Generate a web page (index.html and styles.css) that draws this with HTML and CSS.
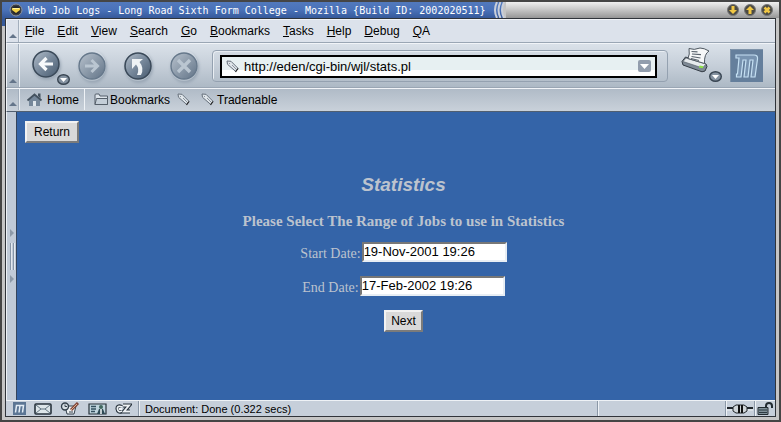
FILE: index.html
```html
<!DOCTYPE html>
<html lang="en">
<head>
    <meta charset="UTF-8">
    <meta name="viewport" content="width=device-width, initial-scale=1.0">
    <title>Web Job Logs</title>
    <link rel="stylesheet" href="styles.css">
</head>
<body>
<svg width="0" height="0" class="defs" aria-hidden="true">
    <defs>
        <linearGradient id="ball" x1="0" y1="0" x2="1" y2="1">
            <stop offset="0" stop-color="#b4bfcb"/>
            <stop offset=".5" stop-color="#77889b"/>
            <stop offset="1" stop-color="#475a6e"/>
        </linearGradient>
        <linearGradient id="paleball" x1="0" y1="0" x2="1" y2="1">
            <stop offset="0" stop-color="#b8c2cd"/>
            <stop offset="1" stop-color="#617387"/>
        </linearGradient>
        <symbol id="tag" viewBox="0 0 13 13">
            <path d="M1 1l4 .3 7 7-2.500 3-8-7z" fill="#dfe5ea" stroke="#67717c"/>
            <path d="M3 3l1 1M6 5l4 4" stroke="#8a949e"/>
            <path d="M12 8.500l-2.500 3.500" stroke="#222" stroke-width="1.200"/>
        </symbol>
        <symbol id="drop" viewBox="0 0 13 11">
            <ellipse cx="6.500" cy="5.500" rx="5.800" ry="4.800" fill="#8492a1" stroke="#394552" stroke-width="1.400"/>
            <path d="M3 4h7l-3.500 4z" fill="#fff"/>
        </symbol>
    </defs>
</svg>
<div class="window">
    <header class="titlebar">
        <div class="title">
            <svg class="winmenu" width="14" height="14" viewBox="0 0 14 14"><circle cx="7" cy="7" r="6" fill="#3a3d42" stroke="#8d95a2"/><circle cx="7" cy="7" r="4" fill="#26282b"/><path d="M3 5h8v2l-4 3-4-3z" fill="#f0cf45"/><path d="M4 5.500h6" stroke="#fff2a0"/></svg>
            <span>Web Job Logs - Long Road Sixth Form College - Mozilla {Build ID: 2002020511}</span>
        </div>
        <svg class="swoosh" width="16" height="16" viewBox="0 0 16 16"><path d="M16 0H14Q9 8 14 16h2z" fill="#c4c4c4"/><path d="M7 0Q3 8 7 16M10.500 0Q6.500 8 10.500 16M14 0Q10 8 14 16" fill="none" stroke="#c9cfda" stroke-width="2"/></svg>
        <div class="winbuttons">
            <button aria-label="Minimize"><svg width="12" height="12" viewBox="0 0 12 12"><circle cx="6" cy="6" r="5.500" fill="#4b4a45" stroke="#777"/><path d="M4.500 2h3v4H10L6 10 2 6h2.500z" fill="#f1c744"/></svg></button>
            <button aria-label="Maximize"><svg width="12" height="12" viewBox="0 0 12 12"><circle cx="6" cy="6" r="5.500" fill="#4b4a45" stroke="#777"/><path d="M4.500 10h3V6H10L6 2 2 6h2.500z" fill="#f1c744"/></svg></button>
            <button aria-label="Close"><svg width="12" height="12" viewBox="0 0 12 12"><circle cx="6" cy="6" r="5.500" fill="#4b4a45" stroke="#777"/><path d="M3.500 3.500l5 5M8.500 3.500l-5 5" stroke="#f1c744" stroke-width="2.600"/></svg></button>
        </div>
    </header>
    <div class="frame">
        <div class="browser">
            <nav class="bar menubar">
                <div class="grippy"></div>
                <div class="menus">
                    <a href="#"><u>F</u>ile</a>
                    <a href="#"><u>E</u>dit</a>
                    <a href="#"><u>V</u>iew</a>
                    <a href="#"><u>S</u>earch</a>
                    <a href="#"><u>G</u>o</a>
                    <a href="#"><u>B</u>ookmarks</a>
                    <a href="#"><u>T</u>asks</a>
                    <a href="#"><u>H</u>elp</a>
                    <a href="#"><u>D</u>ebug</a>
                    <a href="#"><u>Q</u>A</a>
                </div>
            </nav>
            <div class="bar toolbar">
                <div class="grippy"></div>
                <div class="navbuttons">
                    <div class="back">
                        <button class="round" aria-label="Back"><svg width="28" height="28" viewBox="0 0 28 28"><circle cx="14" cy="14" r="13" fill="url(#ball)" stroke="#3b4a5a" stroke-width="1.600"/><path d="M14.500 8L8.500 14l6 6M9 14h12" fill="none" stroke="#f7f9fb" stroke-width="3.200"/></svg></button>
                        <button class="more" aria-label="Back list"><svg width="13" height="11"><use href="#drop"/></svg></button>
                    </div>
                    <button class="round" aria-label="Forward"><svg width="28" height="28" viewBox="0 0 28 28"><circle cx="14" cy="14" r="13" fill="url(#paleball)" stroke="#66788b" stroke-width="1.400"/><path d="M13.500 8l6 6-6 6M19 14H7" fill="none" stroke="#bac6d1" stroke-width="3"/></svg></button>
                    <button class="round" aria-label="Reload"><svg width="28" height="28" viewBox="0 0 28 28"><circle cx="14" cy="14" r="13" fill="url(#ball)" stroke="#3b4a5a" stroke-width="1.600"/><path d="M8 7h11l-3.500 3q5 6 1.500 13h-4q3-6-1-10.500L8 17z" fill="#eef2f5"/></svg></button>
                    <button class="round" aria-label="Stop"><svg width="28" height="28" viewBox="0 0 28 28"><circle cx="14" cy="14" r="13" fill="url(#paleball)" stroke="#66788b" stroke-width="1.400"/><path d="M8 8l12 12M20 8L8 20" stroke="#bac6d1" stroke-width="3.400"/></svg></button>
                </div>
                <div class="urlpanel">
                    <div class="urlbox">
                        <svg width="13" height="13"><use href="#tag"/></svg>
                        <input type="text" value="http://eden/cgi-bin/wjl/stats.pl" aria-label="Location">
                        <button class="history" aria-label="History"><svg width="13" height="12" viewBox="0 0 13 12"><rect width="13" height="12" rx="2" fill="#929dad"/><path d="M2 4h9L6.500 9z" fill="#fff"/></svg></button>
                    </div>
                </div>
                <div class="print">
                    <button aria-label="Print"><svg width="28" height="26" viewBox="0 0 28 26"><path d="M1 14.500l3.500-4.500L25 17l1 2.500-2 4.500-3 .8L2 18z" fill="#7f8a96" stroke="#333b44"/><path d="M2 14.500l3-3.500 20 6-3.500 4z" fill="#e6eaed" stroke="#5a636d" stroke-width=".7"/><path d="M8 1.500q5 2 11-.5 4 0 9 3-5 3-4.500 12.500L7 11.500q2-4 1-10z" fill="#f6f7f8" stroke="#4f5861"/><path d="M10.500 4.500l6 .3M11 7l9 .6M10.500 9.500l9 1.500M10 11.500l8 2" stroke="#59626c" stroke-width="1.200"/><path d="M18.500 18.500l4 .8-.6 2-4-.6z" fill="#8ee04b"/></svg></button>
                    <button class="more" aria-label="Print options"><svg width="13" height="11"><use href="#drop"/></svg></button>
                </div>
                <svg class="throbber" width="33" height="33" viewBox="0 0 33 33"><rect width="33" height="33" fill="#657f9c"/><path d="M.5 33V.5H33" fill="none" stroke="#7f93a9"/><path d="M6 6h18q4 0 3.500 4L25 28h-4l2-17h-3l-2 17h-4l2-17h-3l-2 17H6.500V25h1L9 9H6z" fill="#7893b0" stroke="#c5e0f3" stroke-width="1.200"/></svg>
            </div>
            <div class="bar personal">
                <div class="grippy"></div>
                <a class="home" href="#"><svg width="18" height="15" viewBox="0 0 18 15"><path d="M3 8v6h11V8L8.500 3z" fill="#75879a"/><path d="M1.500 8.500l7-6 7 6" fill="none" stroke="#44525f" stroke-width="1.800"/><path d="M12 1.500h2.500v5L12 4z" fill="#44525f"/><path d="M7 9h3v5H7z" fill="#dfe6ec"/></svg>Home</a>
                <a class="folder" href="#"><svg width="15" height="13" viewBox="0 0 15 13"><path d="M1 11.500V2q0-1 1-1h3l1 2h7.500v8.500z" fill="#dce3ea" stroke="#555f6a"/><path d="M1 11.500l1.500-6h11v6z" fill="#c4ced8" stroke="#555f6a"/></svg>Bookmarks</a>
                <a class="tag" href="#" aria-label="Untitled"><svg width="13" height="13"><use href="#tag"/></svg></a>
                <a class="tag" href="#"><svg width="13" height="13"><use href="#tag"/></svg>Tradenable</a>
            </div>
            <div class="middle">
                <div class="sidebar">
                    <svg width="6" height="56" viewBox="0 0 6 56"><path d="M1 1l4 4-4 4zM1 47l4 4-4 4z" fill="#8c99a8"/><path d="M1.500 15v27M4.500 15v27" stroke="#8796a8"/><path d="M2.500 15v27M5.500 15v27" stroke="#e5eaf0"/></svg>
                </div>
                <main>
                    <button class="button">Return</button>
                    <form>
                        <h1>Statistics</h1>
                        <h2>Please Select The Range of Jobs to use in Statistics</h2>
                        <div class="field">
                            <label for="start">Start Date:</label>
                            <input type="text" id="start" value="19-Nov-2001 19:26">
                        </div>
                        <div class="field">
                            <label for="end">End Date:</label>
                            <input type="text" id="end" value="17-Feb-2002 19:26">
                        </div>
                        <button type="button" class="button">Next</button>
                    </form>
                </main>
            </div>
            <footer>
                <div class="tasks">
                    <svg width="13" height="13" viewBox="0 0 13 13"><rect width="13" height="13" fill="#5c7694"/><path d="M2.500 10.500L3.500 3.500h7l-1 7M7 3.500l-1 7" fill="none" stroke="#e3edf6" stroke-width="1.500"/></svg>
                    <svg width="18" height="12" viewBox="0 0 18 12"><rect x="1" y="1" width="16" height="10" rx="1" fill="#dde5e9" stroke="#27323c" stroke-width="1.600"/><path d="M2 2l5 4h4l5-4M2 10l5-4M16 10l-5-4" fill="none" stroke="#637581"/></svg>
                    <svg width="20" height="13" viewBox="0 0 20 13"><path d="M5 4h11l-2 8H7z" fill="#edf0f2" stroke="#34414c"/><circle cx="5" cy="4.500" r="3.500" fill="#d7dfe5" stroke="#34414c" stroke-width="1.400"/><path d="M5 2.500v2h2M9 10h4" fill="none" stroke="#34414c"/><path d="M18 1l-7 7" stroke="#80463b" stroke-width="3"/><path d="M17 2l-6 6" stroke="#dfb08c"/></svg>
                    <svg width="19" height="12" viewBox="0 0 19 12"><path d="M1 1h17v10H1z" fill="#bfd4dd" stroke="#28333b" stroke-width="1.200"/><path d="M3 3.500h5M3 6h5M3 8.500h4" stroke="#34505f" stroke-width="1.400"/><circle cx="13" cy="4" r="2" fill="#42675f"/><path d="M9 11l2-5h4l2 5z" fill="#2e4a55"/><path d="M13 6v5" stroke="#f6fafa" stroke-width="1.500"/></svg>
                    <svg width="17" height="11" viewBox="0 0 17 11"><g fill="none" stroke="#27323c" stroke-width="4"><path d="M7 4Q2 2 2.500 6T7 8"/><path d="M8 2.500h6L9 8.500h6"/></g><g fill="none" stroke="#edf1f4" stroke-width="1.900"><path d="M7 4Q2 2 2.500 6T7 8M4 6h3"/><path d="M8 2.500h6L9 8.500h6"/></g></svg>
                </div>
                <div class="status">Document: Done (0.322 secs)</div>
                <div class="progress"></div>
                <div class="online"><svg width="26" height="10" viewBox="0 0 26 10"><path d="M0 4h26" stroke="#20262b" stroke-width="2"/><path d="M0 6h26" stroke="#eef2f4"/><path d="M6 3l3-2h8l3 2v4l-3 2H9L6 7z" fill="#cfd5d8" stroke="#20262b"/><path d="M12 1v8M15 1v8" stroke="#111" stroke-width="2"/></svg></div>
                <div class="lock"><svg width="17" height="13" viewBox="0 0 17 13"><path d="M9 6V4q0-3 3-3t3 3v2" fill="none" stroke="#222b31" stroke-width="2"/><path d="M1 5.500h10v7H1z" fill="#809099" stroke="#222b31"/><path d="M2 8h8M2 10.500h8" stroke="#2d3a42"/></svg></div>
            </footer>
        </div>
    </div>
</div>
</body>
</html>
```
FILE: styles.css
```css
* {
    box-sizing: border-box;
}

body {
    margin: 0;
    font-family: "Liberation Sans", Arial, sans-serif;
    font-size: 12px;
    color: black;
}

.defs {
    position: absolute;
}

svg {
    display: block;
    flex: none;
}

button {
    padding: 0;
    border: none;
    background: none;
    font: inherit;
}

a {
    color: black;
    text-decoration: none;
}

.window {
    display: flex;
    flex-direction: column;
    min-height: 100vh;
    border: 2px solid #454545;
    background: #454545;
}

.titlebar {
    display: flex;
    height: 16px;
    background: linear-gradient(#efefef, #c4c4c4 50%, #969696);
}

.title {
    display: flex;
    align-items: center;
    gap: 5px;
    padding-left: 7px;
    padding-right: 4px;
    background: linear-gradient(#5279bd, #4a72b9 50%, #36599a);
    color: white;
    font-family: "DejaVu Sans Mono", monospace;
    font-size: 10px;
    white-space: pre;
}

.swoosh {
    background: linear-gradient(#5279bd, #4a72b9 50%, #36599a);
}

.winbuttons {
    display: flex;
    align-items: center;
    gap: 5px;
    margin-left: auto;
    padding-right: 6px;
}

.frame {
    display: flex;
    flex: 1;
    padding: 0 3px 3px;
    background: linear-gradient(#36599a 8px, transparent 8px) left / 3px 100% no-repeat, #c5c5c5;
}

.browser {
    display: flex;
    flex-direction: column;
    flex: 1;
    border: 1px solid #30343a;
}

.bar {
    display: flex;
    align-items: center;
    border-top: 1px solid #f1f4f8;
    border-left: 1px solid #f1f4f8;
    border-bottom: 1px solid #9aa6b4;
}

/* collapse handle on the left of every bar */
.grippy {
    align-self: stretch;
    display: flex;
    align-items: flex-end;
    justify-content: center;
    width: 12px;
    padding-bottom: 4px;
    border-right: 1px solid #a3afbd;
    box-shadow: 1px 0 #e9eef3;
}

.grippy::after {
    content: "";
    border: 4px solid transparent;
    border-top: none;
    border-bottom-color: #64758a;
}

.menubar {
    height: 24px;
    background: #dce2eb;
}

.menus {
    display: flex;
    gap: 13px;
    padding-left: 6px;
}

.toolbar {
    height: 45px;
    background: linear-gradient(#dae1e9, #c6cfd9 50%, #adb9c5);
}

.navbuttons {
    display: flex;
    gap: 18px;
    padding-left: 13px;
}

.round {
    border-radius: 50%;
    box-shadow: 1px 2px 3px #9aa7b5;
}

.back,
.print {
    position: relative;
}

.more {
    position: absolute;
    left: 25px;
    bottom: -4px;
}

.urlpanel {
    flex: 1;
    margin: 0 13px 0 14px;
    padding: 4px 10px 3px 7px;
    border: 1px solid #94a1b0;
    border-radius: 4px;
    box-shadow: inset 1px 1px #e9eef3;
}

.urlbox {
    display: flex;
    align-items: center;
    height: 23px;
    padding: 0 4px;
    border: 2px solid black;
    background: linear-gradient(#e7f0f2 70%, white 70%);
}

.urlbox input {
    flex: 1;
    min-width: 0;
    padding: 0 5px;
    border: none;
    background: none;
    font: inherit;
    font-size: 13px;
}

.print {
    margin: 0 21px 8px 0;
}

.print .more {
    left: 28px;
    bottom: -6px;
}

.throbber {
    margin-right: 12px;
}

.personal {
    height: 24px;
    padding-bottom: 1px;
    background: linear-gradient(#b0bbc7, #c9d1da);
    border-bottom: 1px solid #515f70;
}

.personal a {
    display: flex;
    align-items: center;
}

.personal .home {
    align-self: stretch;
    gap: 3px;
    padding: 0 5px 0 7px;
    border-right: 1px solid #eef2f6;
}

.personal .folder {
    gap: 1px;
    padding-left: 9px;
}

.personal .tag {
    gap: 3px;
    padding-left: 7px;
}

.personal .tag + .tag {
    padding-left: 11px;
}

.middle {
    display: flex;
    flex: 1;
}

.sidebar {
    display: flex;
    align-items: center;
    justify-content: center;
    width: 11px;
    background: #c0cad7;
    border-left: 1px solid #eef2f6;
    border-right: 1px solid #34445c;
}

main {
    flex: 1;
    padding: 9px 8px;
    background: #3464a8;
    color: #bcc3ce;
}

.button {
    height: 22px;
    padding: 0 5px;
    border: 2px solid;
    border-color: #f2f2f2 #7b7b7b #7b7b7b #f2f2f2;
    background: #d9d9d9;
    color: black;
}

main > .button {
    padding: 0 7px;
}

form {
    display: flex;
    flex-direction: column;
    align-items: center;
    padding: 31px 0 0 15px;
}

h1 {
    margin: 0 0 16px;
    font-size: 19px;
    line-height: 22px;
    font-style: italic;
}

h2 {
    margin: 0 0 12px;
    font-family: "Liberation Serif", "Times New Roman", serif;
    font-size: 15px;
    line-height: 18px;
}

.field {
    display: flex;
    align-items: center;
    gap: 1px;
    margin-bottom: 14px;
    font-family: "Liberation Serif", "Times New Roman", serif;
    font-size: 14px;
}

.field label {
    padding-top: 3px;
}

.field input {
    width: 145px;
    height: 20px;
    padding: 0 0 2px;
    border: 2px solid;
    border-color: #777 #e8eef4 #e8eef4 #777;
    background: white;
    font-family: "Liberation Sans", Arial, sans-serif;
    font-size: 13px;
}

footer {
    display: flex;
    height: 16px;
    background: #c6cfda;
    border-top: 1px solid #eef2f6;
    font-size: 11px;
}

footer > div {
    display: flex;
    align-items: center;
    border-right: 1px solid #8b98a7;
    box-shadow: 1px 0 #eef2f6;
}

.tasks {
    gap: 8px;
    padding: 0 6px 0 7px;
}

.status {
    flex: 1;
    padding-left: 6px;
}

.progress {
    width: 128px;
}

.online {
    padding: 0 1px;
}

footer .lock {
    padding: 0 1px 0 2px;
    border-right: none;
    box-shadow: none;
}
```
